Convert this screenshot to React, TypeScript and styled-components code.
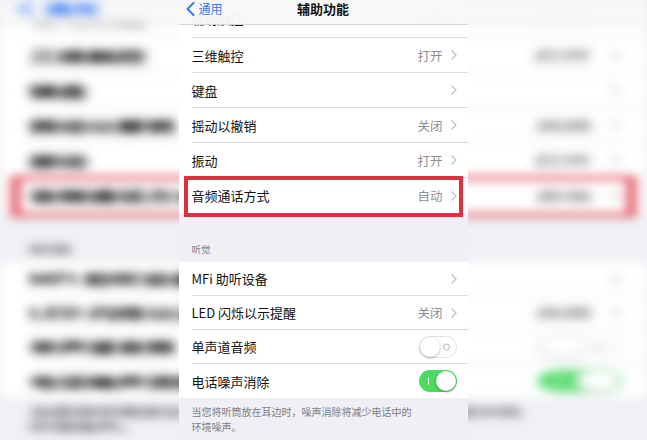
import styled, { createGlobalStyle, css } from "styled-components";

const GlobalStyle = createGlobalStyle`
  html, body {
    margin: 0;
    padding: 0;
    background: #efeff4;
    font-family: "Noto Sans CJK SC", "Noto Sans", "Liberation Sans", sans-serif;
  }
`;

type Row = {
  label: string;
  value?: string;
  chevron?: boolean;
  toggle?: "on" | "off";
  highlight?: boolean;
};

const visionRows: Row[] = [
  { label: "辅助触控", value: "关闭", chevron: true },
  { label: "三维触控", value: "打开", chevron: true },
  { label: "键盘", chevron: true },
  { label: "摇动以撤销", value: "关闭", chevron: true },
  { label: "振动", value: "打开", chevron: true },
  { label: "音频通话方式", value: "自动", chevron: true, highlight: true },
];

const hearingRows: Row[] = [
  { label: "MFi 助听设备", chevron: true },
  { label: "LED 闪烁以示提醒", value: "关闭", chevron: true },
  { label: "单声道音频", toggle: "off" },
  { label: "电话噪声消除", toggle: "on" },
];

const Chevron = () => (
  <svg width="6" height="10" viewBox="0 0 6 10">
    <polyline
      points="1,1 5,5 1,9"
      fill="none"
      stroke="#c4c4c9"
      strokeWidth="1.4"
      strokeLinecap="round"
      strokeLinejoin="round"
    />
  </svg>
);

const BackChevron = () => (
  <svg width="9" height="14" viewBox="0 0 9 14">
    <polyline
      points="7.5,1 1.5,7 7.5,13"
      fill="none"
      stroke="#3478f6"
      strokeWidth="2"
      strokeLinecap="round"
      strokeLinejoin="round"
    />
  </svg>
);

// ghost = the copy used as the blurred backdrop, its text drawn heavier
const SettingsScreen = ({ ghost = false }: { ghost?: boolean }) => (
  <Screen $ghost={ghost}>
    <NavBar>
      <BackButton>
        <BackChevron />
        通用
      </BackButton>
      <Title>辅助功能</Title>
    </NavBar>
    <Content>
      <Group>
        {visionRows.map((row, i) => (
          <SettingRow
            key={row.label}
            $height={i === 0 ? 38 : 35}
            $last={i === visionRows.length - 1}
          >
            <Label>{row.label}</Label>
            <Value>{row.value}</Value>
            {row.chevron && <Chevron />}
            {row.highlight && <Highlight />}
          </SettingRow>
        ))}
      </Group>
      <SectionHeader>听觉</SectionHeader>
      <Group>
        {hearingRows.map((row, i) => (
          <SettingRow key={row.label} $height={34} $last={i === hearingRows.length - 1}>
            <Label>{row.label}</Label>
            <Value>{row.value}</Value>
            {row.chevron && <Chevron />}
            {row.toggle && (
              <Switch $on={row.toggle === "on"}>
                <SwitchMark $on={row.toggle === "on"} />
                <Knob $on={row.toggle === "on"} />
              </Switch>
            )}
          </SettingRow>
        ))}
      </Group>
      <Footnote>
        当您将听筒放在耳边时，噪声消除将减少电话中的
        <br />
        环境噪声。
      </Footnote>
    </Content>
  </Screen>
);

export default function App() {
  return (
    <>
      <GlobalStyle />
      <Page>
        {/* the same screen, stretched and blurred, fills the sides */}
        <Backdrop>
          <Stretched>
            <SettingsScreen ghost />
          </Stretched>
        </Backdrop>
        <Wash />
        <Front>
          <SettingsScreen />
        </Front>
      </Page>
    </>
  );
}

const Page = styled.div`
  position: relative;
  width: 647px;
  height: 440px;
  overflow: hidden;
  background: #efeff4;
`;

const Backdrop = styled.div`
  position: absolute;
  inset: 0;
  display: flex;
  justify-content: center;
  padding-right: 1px;
  filter: blur(5px);
`;

const Stretched = styled.div`
  transform: scaleX(2.24);
  transform-origin: center top;
  filter: blur(1.5px);
`;

const Wash = styled.div`
  position: absolute;
  inset: 0;
  background: rgba(255, 255, 255, 0.1);
`;

const Front = styled.div`
  position: relative;
  display: flex;
  justify-content: center;
  padding-right: 1px;
`;

const Screen = styled.div<{ $ghost: boolean }>`
  position: relative;
  width: 289px;
  height: 440px;
  overflow: hidden;
  background: #efeff4;
  ${(p) =>
    p.$ghost &&
    css`
      * {
        -webkit-text-stroke: 1px currentColor;
      }
    `}
`;

const NavBar = styled.div`
  position: absolute;
  top: 0;
  left: 0;
  right: 0;
  height: 25px;
  z-index: 2;
  display: flex;
  align-items: center;
  justify-content: center;
  background: rgba(248, 248, 248, 0.97);
  border-bottom: 1px solid #d6d6da;
  box-sizing: border-box;
  padding-bottom: 7px;
`;

const BackButton = styled.div`
  position: absolute;
  left: 7px;
  top: 2px;
  display: flex;
  align-items: center;
  gap: 4px;
  color: #3478f6;
  font-size: 12px;
  line-height: 14px;
`;

const Title = styled.div`
  font-size: 13px;
  font-weight: 700;
  color: #111;
  line-height: 16px;
`;

const Content = styled.div`
  padding-top: 0;
`;

const Group = styled.div`
  background: #fff;
`;

const SettingRow = styled.div<{ $height: number; $last: boolean }>`
  position: relative;
  height: ${(p) => p.$height}px;
  margin-left: 13px;
  padding-right: 11px;
  display: flex;
  align-items: center;
  gap: 9px;
  box-sizing: border-box;
  border-bottom: ${(p) => (p.$last ? "none" : "1px solid #dcdce0")};
`;

const Label = styled.div`
  flex: 1;
  font-size: 13px;
  color: #111;
  white-space: nowrap;
`;

const Value = styled.div`
  font-size: 12.5px;
  color: #8e8e93;
  margin-right: -1px;
`;

const Highlight = styled.div`
  position: absolute;
  top: -2px;
  bottom: -4px;
  left: -8px;
  right: 5px;
  border: 4px solid #dc3240;
  pointer-events: none;
`;

const SectionHeader = styled.div`
  height: 49px;
  box-sizing: border-box;
  padding: 0 0 6px 13px;
  display: flex;
  align-items: flex-end;
  font-size: 9.5px;
  color: #7d7d82;
`;

const Switch = styled.div<{ $on: boolean }>`
  position: relative;
  width: 38px;
  height: 22px;
  border-radius: 11px;
  box-sizing: border-box;
  background: ${(p) => (p.$on ? "#4cd964" : "#fff")};
  border: ${(p) => (p.$on ? "none" : "1.5px solid #e3e3e6")};
  display: flex;
  align-items: center;
  justify-content: ${(p) => (p.$on ? "flex-end" : "flex-start")};
  padding: ${(p) => (p.$on ? "0 1px" : "0")};
`;

const Knob = styled.div<{ $on: boolean }>`
  width: 20px;
  height: 20px;
  border-radius: 50%;
  background: #fff;
  box-shadow: 0 1px 3px rgba(0, 0, 0, 0.3);
  z-index: 1;
`;

const SwitchMark = styled.div<{ $on: boolean }>`
  position: absolute;
  top: 50%;
  transform: translateY(-50%);
  ${(p) =>
    p.$on
      ? `left: 9px; width: 1px; height: 7px; background: #fff;`
      : `right: 6px; width: 5px; height: 5px; border-radius: 50%; border: 1px solid #b5b5ba;`}
`;

const Footnote = styled.div`
  padding: 6px 13px 0;
  font-size: 10px;
  line-height: 15px;
  color: #7d7d82;
`;
